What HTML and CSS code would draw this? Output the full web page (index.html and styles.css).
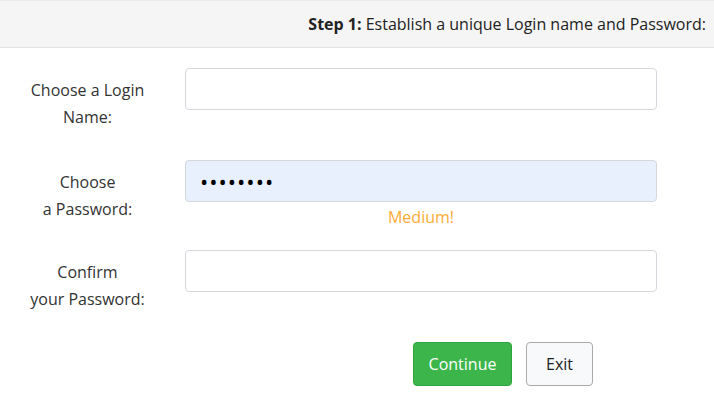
FILE: index.html
```html
<!DOCTYPE html>
<html lang="en">
<head>
<meta charset="utf-8">
<title>Step 1</title>
<link rel="stylesheet" href="styles.css">
</head>
<body>
<header class="step-bar">
  <p class="step-title"><strong>Step 1:</strong> Establish a unique Login name and Password:</p>
</header>
<form class="signup">
  <div class="row">
    <label class="label" for="login">Choose a Login<br>Name:</label>
    <div class="field">
      <input class="input" id="login" type="text">
    </div>
  </div>
  <div class="row row-strength">
    <label class="label" for="pw">Choose<br>a Password:</label>
    <div class="field">
      <input class="input input-filled" id="pw" type="password" value="abcdefgh">
      <div class="strength">Medium!</div>
    </div>
  </div>
  <div class="row">
    <label class="label" for="pw2">Confirm<br>your Password:</label>
    <div class="field">
      <input class="input" id="pw2" type="password">
    </div>
  </div>
  <div class="actions">
    <button class="btn btn-primary" type="button">Continue</button>
    <button class="btn btn-default" type="button">Exit</button>
  </div>
</form>
</body>
</html>
```
FILE: styles.css
```css
* { box-sizing: border-box; }
html, body { margin: 0; padding: 0; background: #fff; }
body {
  font-family: "Open Sans", "Noto Sans", sans-serif;
  color: #333;
  font-size: 16px;
}
.step-bar {
  background: #f5f5f5;
  border-top: 1px solid #ebebeb;
  border-bottom: 1px solid #e3e3e3;
  height: 48px;
  display: flex;
  align-items: center;
  justify-content: flex-end;
  padding-right: 8px;
}
.step-title {
  margin: 0;
  font-size: 16px;
  color: #222;
}
.step-title strong { font-weight: 700; }
.signup { padding-top: 20px; }
.row {
  display: flex;
  align-items: flex-start;
  margin-bottom: 29px;
}
.row-strength { margin-bottom: 23px; }
.label {
  width: 175px;
  text-align: center;
  line-height: 27px;
  padding-top: 9px;
  color: #333;
}
.field {
  width: 472px;
  margin-left: 10px;
}
.input {
  display: block;
  width: 100%;
  height: 42px;
  border: 1px solid #d4d7dc;
  border-radius: 4px;
  background: #fff;
  padding: 6px 14px;
  font-size: 16px;
  font-family: inherit;
  outline: none;
}
.input-filled {
  background: #e8f0fe;
  font-size: 22px;
  letter-spacing: 1px;
  color: #000;
}
.strength {
  margin-top: 5px;
  text-align: center;
  color: #fbac35;
  line-height: 20px;
}
.actions {
  display: flex;
  gap: 14px;
  padding-left: 413px;
}
.btn {
  height: 44px;
  border-radius: 4px;
  font-family: inherit;
  font-size: 16px;
  padding: 0 12px;
  cursor: pointer;
}
.btn-primary {
  width: 99px;
  background: #3cb54a;
  border: 1px solid #2ea43c;
  color: #fff;
}
.btn-default {
  width: 67px;
  background: #f8f9fa;
  border: 1px solid #aaa;
  color: #222;
}
```
